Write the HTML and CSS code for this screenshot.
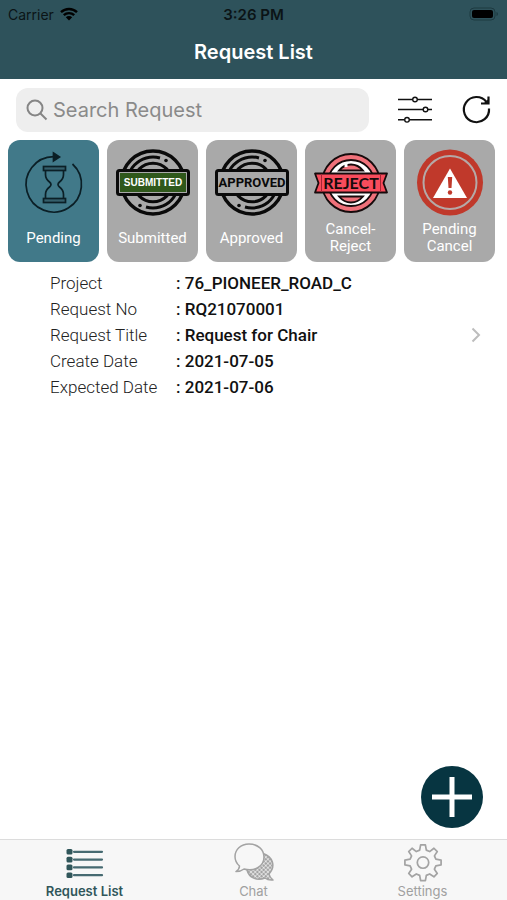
FILE: index.html
```html
<!DOCTYPE html>
<html lang="en">

<head>
  <meta charset="UTF-8">
  <meta name="viewport" content="width=device-width, initial-scale=1.0">
  <title>Request List</title>
  <link rel="stylesheet" href="styles.css">
</head>

<body>
  <header class="header">
    <div class="status">
      <div class="carrier">
        <span>Carrier</span>
        <svg width="18" height="14" viewBox="0 0 18 14">
          <path d="M1 5.200a11.500 11.500 0 0 1 16 0M3.800 8.200a7.500 7.500 0 0 1 10.400 0" fill="none" stroke="#000" stroke-width="2.400"/>
          <path d="M5.800 10.200a4.600 4.600 0 0 1 6.400 0L9 13.500z"/>
        </svg>
      </div>
      <span class="time">3:26 PM</span>
      <svg class="battery" width="30" height="14" viewBox="0 0 30 14">
        <rect x="1" y="1" width="25" height="12" rx="4" fill="none" stroke="#1d3a41"/>
        <rect x="3" y="3" width="21" height="8" rx="2"/>
        <path d="M27.500 5v4q1.500-.5 1.500-2t-1.500-2z" fill="#1d3a41"/>
      </svg>
    </div>
    <h1>Request List</h1>
  </header>

  <div class="toolbar">
    <label class="search">
      <svg width="22" height="22" viewBox="0 0 22 22" fill="none" stroke="#858585" stroke-width="2">
        <circle cx="9" cy="9" r="7.500"/>
        <path d="M14.500 14.500L20.500 20.500"/>
      </svg>
      <input type="search" placeholder="Search Request" aria-label="Search Request">
    </label>
    <button type="button" class="icon-btn" aria-label="Filter">
      <svg width="36" height="30" viewBox="0 0 36 30" fill="none" stroke="#111" stroke-width="1.400">
        <path d="M1 4.500h14.500M20.500 4.500H35M1 14.500h25M31 14.500h4M1 24.800h6.500M12.500 24.800H35"/>
        <circle cx="18" cy="4.500" r="2.300"/>
        <circle cx="28.500" cy="14.500" r="2.300"/>
        <circle cx="10" cy="24.800" r="2.300"/>
      </svg>
    </button>
    <button type="button" class="icon-btn" aria-label="Refresh">
      <svg width="30" height="30" viewBox="0 0 30 30" fill="none" stroke="#111" stroke-width="2.200">
        <path d="M28 13.500A12.600 12.600 0 1 1 25.500 7"/>
        <path d="M27.500 1.500V8.500H20"/>
        <path d="M27.500 4V8.500H22.500z" fill="#111" stroke="none"/>
      </svg>
    </button>
  </div>

  <div class="tiles">
    <button type="button" class="tile active">
      <svg width="76" height="72" viewBox="0 0 76 72" fill="none" stroke="#0b1f26" stroke-width="1.700">
        <path d="M56.500 18A27.700 27.700 0 1 1 38 10.700"/>
        <path d="M37.500 7L43.500 11L37.500 15z" fill="#0b1f26"/>
        <g fill="#355f6b">
          <rect x="27.500" y="20.500" width="22" height="4"/>
          <rect x="27.500" y="52.500" width="22" height="4"/>
        </g>
        <path d="M29.500 24.500v4q0 4.500 4 7.500q3 2.500 0 5q-4 3-4 7.500v4M47.500 24.500v4q0 4.500-4 7.500q-3 2.500 0 5q4 3 4 7.500v4"/>
      </svg>
      <span>Pending</span>
    </button>
    <button type="button" class="tile">
      <svg width="76" height="72" viewBox="0 0 76 72" fill="none" stroke="#0a0a0a" stroke-width="3">
        <circle cx="38" cy="36.500" r="31.500" stroke-width="3.400"/>
        <path d="M45 12A25.500 25.500 0 0 0 14 45M31 61A25.500 25.500 0 0 0 62 28"/>
        <circle cx="38" cy="36.500" r="19.300"/>
        <circle cx="51" cy="14.500" r="1.800" fill="#0a0a0a" stroke="none"/>
        <circle cx="25" cy="59.500" r="1.800" fill="#0a0a0a" stroke="none"/>
        <rect x="2.500" y="24.500" width="71" height="24" rx="2" fill="#a9a9a9"/>
        <rect x="5" y="27" width="66" height="19" fill="#2f581b" stroke="none"/>
        <text class="stamp submitted" x="38" y="40">SUBMITTED</text>
      </svg>
      <span>Submitted</span>
    </button>
    <button type="button" class="tile">
      <svg width="76" height="72" viewBox="0 0 76 72" fill="none" stroke="#0a0a0a" stroke-width="3">
        <circle cx="38" cy="36.500" r="31.500" stroke-width="3.400"/>
        <path d="M45 12A25.500 25.500 0 0 0 14 45M31 61A25.500 25.500 0 0 0 62 28"/>
        <circle cx="38" cy="36.500" r="19.300"/>
        <circle cx="51" cy="14.500" r="1.800" fill="#0a0a0a" stroke="none"/>
        <circle cx="25" cy="59.500" r="1.800" fill="#0a0a0a" stroke="none"/>
        <rect x="2.500" y="24.500" width="71" height="24" rx="2" fill="#a9a9a9"/>
        <text class="stamp approved" x="38" y="41">APPROVED</text>
      </svg>
      <span>Approved</span>
    </button>
    <button type="button" class="tile">
      <svg width="76" height="72" viewBox="0 0 76 72" fill="none" stroke="#160b0c" stroke-width="1.800">
        <circle cx="38" cy="37" r="29" fill="#f0717a"/>
        <circle cx="38" cy="37" r="23" fill="#fff"/>
        <path d="M26 24.500q5-6 12-6t12 6zM26 50.500q5 6 12 6t12-6z" fill="#f0717a"/>
        <path d="M33 17v4" stroke="#fff" stroke-width="3"/>
        <path d="M2 27.500H74L70.500 37L74 46.500H2L5.500 37z" fill="#f94c5c" stroke-linejoin="round"/>
        <path d="M8.500 28v18M67.500 28v18" stroke="#a52633" stroke-width="1"/>
        <text class="stamp reject" x="38" y="43">REJECT</text>
      </svg>
      <span>Cancel-<br>Reject</span>
    </button>
    <button type="button" class="tile">
      <svg width="76" height="72" viewBox="0 0 76 72">
        <circle cx="38" cy="36.500" r="33" fill="#c0392b"/>
        <circle cx="38" cy="36.500" r="26.500" fill="none" stroke="#b5a9a7" stroke-width="2"/>
        <path d="M38 22.500L55 52H21z" fill="#fff"/>
        <path d="M35.800 31h4.400l-.7 11h-3z" fill="#c0392b"/>
        <circle cx="38" cy="46.500" r="2.200" fill="#c0392b"/>
      </svg>
      <span>Pending Cancel</span>
    </button>
  </div>

  <main class="list">
    <a class="request" href="#">
      <dl>
        <dt>Project</dt>
        <dd>76_PIONEER_ROAD_C</dd>
        <dt>Request No</dt>
        <dd>RQ21070001</dd>
        <dt>Request Title</dt>
        <dd>Request for Chair</dd>
        <dt>Create Date</dt>
        <dd>2021-07-05</dd>
        <dt>Expected Date</dt>
        <dd>2021-07-06</dd>
      </dl>
      <svg width="10" height="16" viewBox="0 0 10 16" fill="none" stroke="#bdbdbd" stroke-width="2">
        <path d="M1.500 1.500L8 8L1.500 14.500"/>
      </svg>
    </a>
  </main>

  <button type="button" class="add" aria-label="Add request">
    <svg width="40" height="40" viewBox="0 0 40 40" stroke="#fff" stroke-width="5">
      <path d="M20 0v40M0 20h40"/>
    </svg>
  </button>

  <nav class="tabs">
    <a class="tab current" href="#">
      <svg width="40" height="40" viewBox="0 0 40 40">
        <g fill="#30565a">
          <rect x="1.500" y="6" width="6" height="5.600" rx="1.500"/>
          <rect x="1.500" y="13.800" width="6" height="5.600" rx="1.500"/>
          <rect x="1.500" y="21.600" width="6" height="5.600" rx="1.500"/>
          <rect x="1.500" y="29.400" width="6" height="5.600" rx="1.500"/>
        </g>
        <path d="M9 8.800h28M9 16.600h28M9 24.400h28M9 32.200h28" stroke="#466a71" stroke-width="2.200" stroke-linecap="round"/>
      </svg>
      <span>Request List</span>
    </a>
    <a class="tab" href="#">
      <svg width="40" height="40" viewBox="0 0 40 40" fill="none" stroke="#a3a3a3" stroke-width="1.500" stroke-linejoin="round">
        <defs>
          <pattern id="dots" width="3" height="3" patternUnits="userSpaceOnUse" patternTransform="rotate(45)">
            <circle cx="1" cy="1" r=".8" fill="#c8c8c8"/>
          </pattern>
        </defs>
        <path d="M29 10.500c10 3 13 13 6 20.500q.5 3 4 6q-5 .5-8-2c-8 3-16 0-18-8z" fill="url(#dots)"/>
        <path d="M15 1C6.500 1 1 7 1 13.500c0 4 1.500 7 4.500 9.500q0 3-3.500 5.500q5 0 8-2.500c11 3 20-3 20-12C30 6.500 23.500 1 15 1z" fill="#f7f7f7"/>
      </svg>
      <span>Chat</span>
    </a>
    <a class="tab" href="#">
      <svg width="40" height="40" viewBox="-1 0 42 42" fill="none" stroke="#a3a3a3" stroke-width="1.800" stroke-linejoin="round">
        <path d="M17.500 2h5l1 5.500l3.500 1.500l4.500-3.500l3.500 3.500l-3 4.500l1.500 3.500l5.500 1v5l-5.500 1l-1.500 3.500l3 4.500l-3.500 3.500l-4.500-3l-3.500 1.500l-1 5.500h-5l-1-5.500l-3.500-1.500l-4.500 3l-3.500-3.500l3-4.500l-1.500-3.500l-5.500-1v-5l5.500-1l1.500-3.500l-3-4.500l3.500-3.500l4.500 3.500l3.500-1.500z"/>
        <circle cx="20" cy="20.500" r="6"/>
      </svg>
      <span>Settings</span>
    </a>
  </nav>
</body>

</html>
```

FILE: styles.css
```css
* {
  box-sizing: border-box;
}

body {
  display: flex;
  flex-direction: column;
  min-height: 100vh;
  margin: 0;
  background-color: #fff;
  font-family: Roboto, "Liberation Sans", sans-serif;
}

button {
  padding: 0;
  border: none;
  background: none;
  font-family: inherit;
}

a {
  color: inherit;
  text-decoration: none;
}

svg {
  display: block;
  flex: none;
}

/* header */
.header {
  height: 79px;
  background-color: #2e525b;
  font-family: Inter, "Liberation Sans", sans-serif;
}

.status {
  display: grid;
  grid-template-columns: 1fr auto 1fr;
  align-items: center;
  height: 28px;
  padding: 0 8px;
  font-size: 14px;
  color: #0b1416;
}

.carrier {
  display: flex;
  align-items: center;
  gap: 6px;
}

.time {
  font-size: 15px;
  font-weight: 600;
}

.battery {
  justify-self: end;
}

.header h1 {
  margin: 0;
  color: #fff;
  font-size: 20px;
  font-weight: 600;
  line-height: 48px;
  text-align: center;
}

/* search */
.toolbar {
  display: flex;
  align-items: center;
  padding: 9px 16px 8px;
}

.search {
  display: flex;
  flex: 1;
  align-items: center;
  gap: 5px;
  min-width: 0;
  height: 44px;
  padding: 0 10px;
  border-radius: 12px;
  background-color: #eee;
}

.search input {
  flex: 1;
  min-width: 0;
  padding: 0;
  border: none;
  outline: none;
  background: none;
  font-family: Inter, "Liberation Sans", sans-serif;
  font-size: 20px;
}

.search input::placeholder {
  color: #8a8a8a;
}

.icon-btn {
  margin-left: 28px;
}

/* status tiles */
.tiles {
  display: grid;
  grid-template-columns: repeat(5, 1fr);
  gap: 8px;
  padding: 0 12px 0 8px;
}

.tile {
  display: flex;
  flex-direction: column;
  align-items: center;
  gap: 3px;
  height: 122px;
  padding: 6px 4px;
  border-radius: 12px;
  background-color: #a9a9a9;
  color: #fff;
  font-size: 15px;
  line-height: 17px;
}

.tile.active {
  background-color: #417989;
}

.tile span {
  display: flex;
  align-items: center;
  min-height: 34px;
}

.stamp {
  stroke: none;
  text-anchor: middle;
  font-weight: 700;
}

.submitted {
  fill: #fff;
  font-family: "Liberation Sans", sans-serif;
  font-size: 10px;
}

.approved {
  fill: #0a0a0a;
  font-size: 13px;
}

.reject {
  fill: #160b0c;
  font-family: Lato, "Liberation Sans", sans-serif;
  font-size: 16px;
}

/* requests */
.list {
  flex: 1;
}

.request {
  display: flex;
  align-items: center;
  justify-content: space-between;
  padding: 8px 26px 0 50px;
}

.request dl {
  display: grid;
  grid-template-columns: 126px auto;
  margin: 0;
  font-size: 17px;
  line-height: 26px;
}

.request dt {
  color: #222;
  font-weight: 300;
}

.request dd {
  margin: 0;
  color: #111;
  font-weight: 500;
}

.request dd::before {
  content: ": ";
}

.add {
  display: flex;
  align-items: center;
  align-self: flex-end;
  justify-content: center;
  width: 62px;
  height: 62px;
  margin: 0 24px 11px 0;
  border-radius: 50%;
  background-color: #073541;
}

/* bottom tabs */
.tabs {
  display: grid;
  grid-template-columns: repeat(3, 1fr);
  height: 61px;
  border-top: 1px solid #dcdcdc;
  background-color: #f7f7f7;
  font-family: Inter, "Liberation Sans", sans-serif;
  font-size: 13px;
  line-height: 16px;
}

.tab {
  display: flex;
  flex-direction: column;
  align-items: center;
  padding-top: 3px;
  color: #a0a0a0;
}

.tab.current {
  color: #30565a;
  font-weight: 600;
}
```
